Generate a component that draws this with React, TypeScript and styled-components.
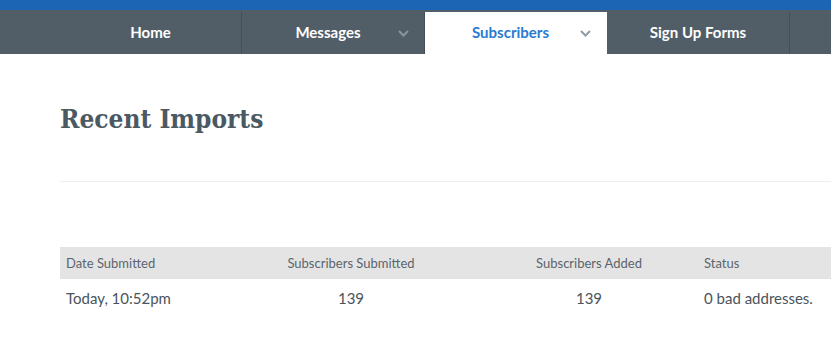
import React from 'react';
import styled, { createGlobalStyle } from 'styled-components';

const GlobalStyle = createGlobalStyle`
  body {
    margin: 0;
    background: #ffffff;
    font-family: Lato, "Open Sans", sans-serif;
    overflow: hidden;
  }
`;

const tabs = [
  { label: 'Home', dropdown: false, active: false, width: 182 },
  { label: 'Messages', dropdown: true, active: false, width: 183 },
  { label: 'Subscribers', dropdown: true, active: true, width: 182 },
  { label: 'Sign Up Forms', dropdown: false, active: false, width: 183 },
];

const rows = [
  { date: 'Today, 10:52pm', submitted: '139', added: '139', status: '0 bad addresses.' },
];

const Chevron: React.FC = () => (
  <ChevronIcon width="11" height="7" viewBox="0 0 11 7">
    <path d="M1 1 L5.5 5.5 L10 1" fill="none" stroke="currentColor" strokeWidth="2" />
  </ChevronIcon>
);

const App: React.FC = () => {
  return (
    <>
      <GlobalStyle />
      <TopStrip />
      <Nav>
        {tabs.map((t) => (
          <Tab key={t.label} $active={t.active} $dropdown={t.dropdown} $width={t.width}>
            {t.label}
            {t.dropdown && <Chevron />}
          </Tab>
        ))}
      </Nav>
      <Main>
        <Heading>Recent Imports</Heading>
        <Rule />
        <Table>
          <HeadRow>
            <HeadCell>Date Submitted</HeadCell>
            <HeadCell $center>Subscribers Submitted</HeadCell>
            <HeadCell $center>Subscribers Added</HeadCell>
            <HeadCell>Status</HeadCell>
          </HeadRow>
          {rows.map((r) => (
            <Row key={r.date}>
              <Cell>{r.date}</Cell>
              <Cell $center>{r.submitted}</Cell>
              <Cell $center>{r.added}</Cell>
              <Cell>{r.status}</Cell>
            </Row>
          ))}
        </Table>
      </Main>
    </>
  );
};

const TopStrip = styled.div`
  height: 10px;
  background: #1b65b4;
`;

const Nav = styled.nav`
  display: flex;
  height: 44px;
  padding: 2px 0 0 60px;
  box-sizing: border-box;
  background: #525e67;
`;

const Tab = styled.div<{ $active: boolean; $dropdown: boolean; $width: number }>`
  position: relative;
  display: flex;
  align-items: center;
  justify-content: center;
  width: ${(p) => p.$width}px;
  height: 42px;
  box-sizing: border-box;
  padding: 0 ${(p) => (p.$dropdown ? '10px' : '0')} 2px 0;
  border-right: 1px solid ${(p) => (p.$active ? '#ffffff' : '#444f58')};
  background: ${(p) => (p.$active ? '#ffffff' : 'transparent')};
  color: ${(p) => (p.$active ? '#2b7bd1' : '#ffffff')};
  font-size: 15px;
  font-weight: 700;
  cursor: pointer;

  svg {
    color: ${(p) => (p.$active ? '#8e9ca7' : '#8595a1')};
  }
`;

const ChevronIcon = styled.svg`
  position: absolute;
  right: 15px;
  top: 18px;
`;

const Main = styled.main`
  padding: 0 0 0 60px;
`;

const Heading = styled.h1`
  margin: 0;
  padding-top: 47px;
  font-family: "DejaVu Serif Condensed", "DejaVu Serif", serif;
  font-size: 26px;
  font-weight: 700;
  line-height: 36px;
  color: #4b5963;
`;

const Rule = styled.hr`
  margin: 44px 0 0;
  border: 0;
  border-top: 1px solid #efefef;
`;

const Table = styled.div`
  margin-top: 65px;
`;

const HeadRow = styled.div`
  display: grid;
  grid-template-columns: 162px 258px 218px 1fr;
  height: 32px;
  align-items: center;
  background: #e4e4e4;
`;

const Row = styled.div`
  display: grid;
  grid-template-columns: 162px 258px 218px 1fr;
  height: 38px;
  align-items: center;
`;

const HeadCell = styled.div<{ $center?: boolean }>`
  padding: 0 6px;
  text-align: ${(p) => (p.$center ? 'center' : 'left')};
  font-size: 13px;
  color: #5b656d;
`;

const Cell = styled.div<{ $center?: boolean }>`
  padding: 0 6px;
  text-align: ${(p) => (p.$center ? 'center' : 'left')};
  font-size: 15px;
  color: #4a545c;
`;

export default App;
